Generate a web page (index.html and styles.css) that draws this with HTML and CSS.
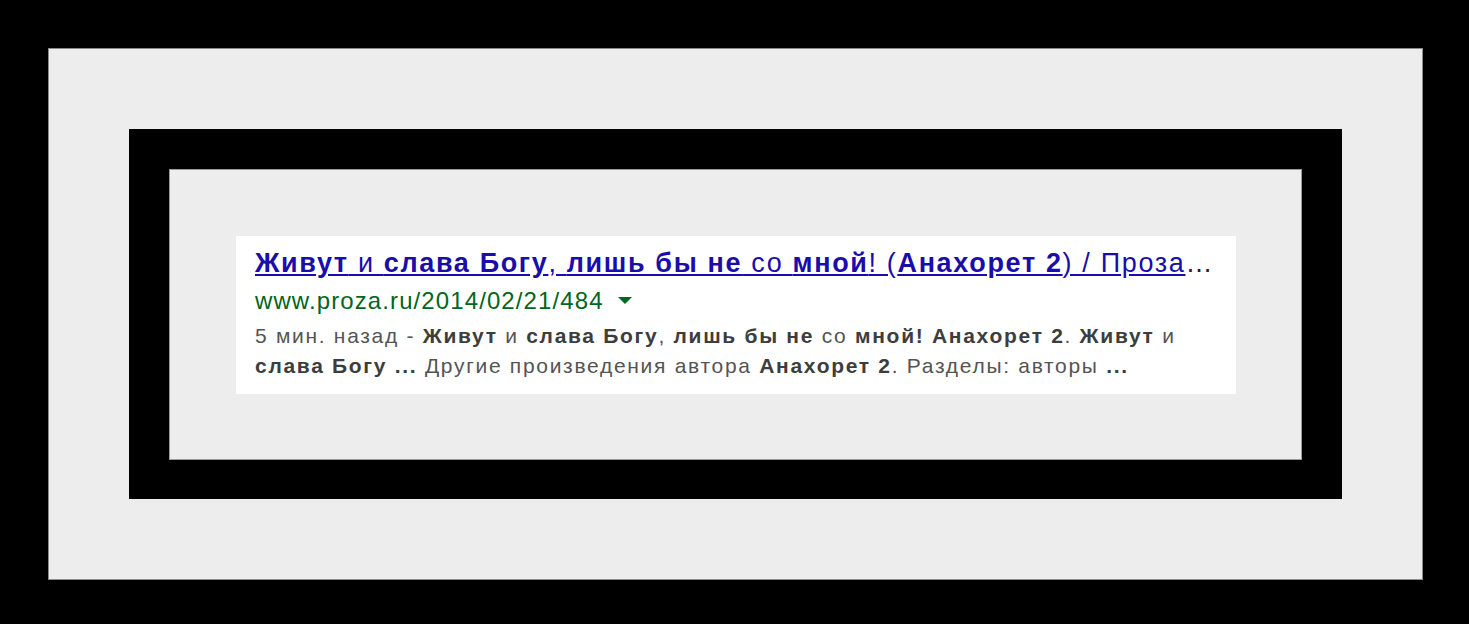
FILE: index.html
```html
<!DOCTYPE html>
<html lang="ru">
<head>
  <meta charset="UTF-8" />
  <title>Живут и слава Богу</title>
  <link rel="stylesheet" href="styles.css">
</head>
<body>

<div class="outer">
  <div class="frame">
    <div class="inner">
      <div class="result">
        <div class="title"><a href="#"><b>Живут</b> и <b>слава Богу</b>, <b>лишь бы не</b> со <b>мной</b>! (<b>Анахорет 2</b>) / Проза</a><span class="more">…</span></div>
        <div class="url">www.proza.ru/2014/02/21/484<span class="arrow"></span></div>
        <div class="snippet">5 мин. назад - <b>Живут</b> и <b>слава Богу</b>, <b>лишь бы не</b> со <b>мной! Анахорет 2</b>. <b>Живут</b> и <b>слава Богу ...</b> Другие произведения автора <b>Анахорет 2</b>. Разделы: авторы <b>...</b></div>
      </div>
    </div>
  </div>
</div>

</body>
</html>
```

FILE: styles.css
```css
* {
  box-sizing: border-box;
}

body {
  margin: 0;
  background: #000;
  padding: 48px 46px 44px 48px;
  font-family: "Liberation Sans", Arial, sans-serif;
}

.outer {
  width: 1375px;
  height: 532px;
  background: #ededed;
  border: 1px solid #8a8a8a;
  padding: 80px;
}

.frame {
  background: #000;
  padding: 40px 40px 39px 40px;
  height: 100%;
}

.inner {
  background: #ededed;
  border: 1px solid #9a9a9a;
  padding: 66px 65px 65px 66px;
  height: 100%;
}

.result {
  background: #fff;
  height: 158px;
  padding: 11px 19px 0 19px;
}

.title {
  font-size: 27px;
  line-height: 33px;
  letter-spacing: 1.65px;
  white-space: nowrap;
  color: #222;
}

.title a {
  color: #1a0dab;
  text-decoration: underline;
}

.title .more {
  letter-spacing: 2.5px;
}

.url {
  font-size: 24px;
  line-height: 41px;
  letter-spacing: 1.1px;
  color: #006621;
  display: flex;
  align-items: center;
}

.arrow {
  width: 0;
  height: 0;
  margin-left: 14px;
  border-left: 7px solid transparent;
  border-right: 7px solid transparent;
  border-top: 7px solid #006621;
}

.snippet {
  font-size: 21px;
  line-height: 30px;
  letter-spacing: 1.7px;
  color: #545454;
}

.snippet b {
  color: #3d3d3d;
}
```
